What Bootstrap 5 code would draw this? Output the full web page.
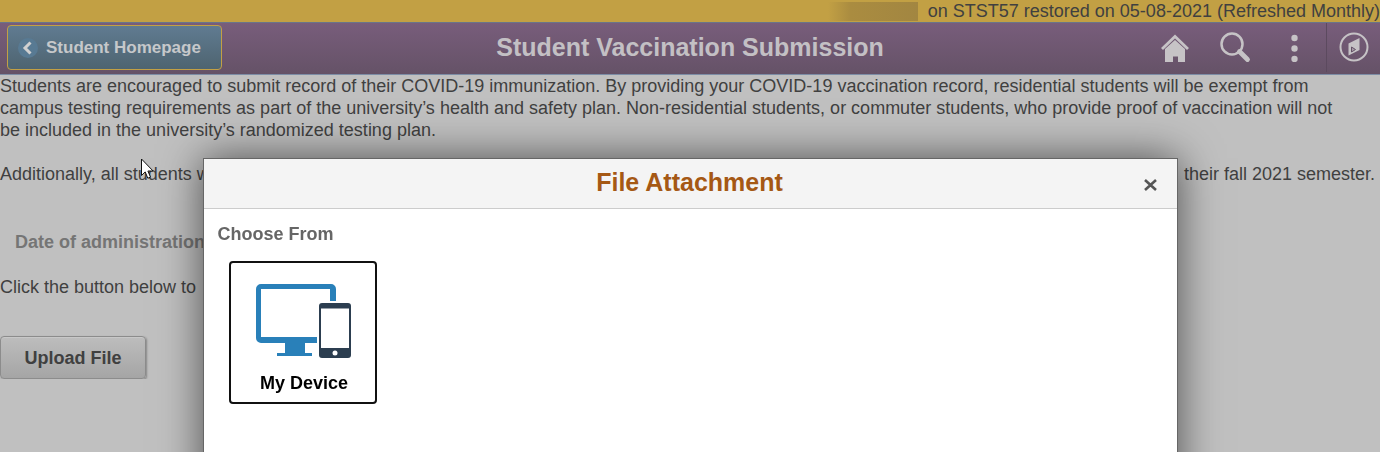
<!DOCTYPE html>
<html lang="en">
<head>
<meta charset="utf-8">
<meta name="viewport" content="width=device-width, initial-scale=1">
<title>Student Vaccination Submission</title>
<link href="https://cdn.jsdelivr.net/npm/bootstrap@5.3.0/dist/css/bootstrap.min.css" rel="stylesheet">
<style>
body{font-family:"Liberation Sans",Arial,sans-serif;font-size:18px;line-height:22px;color:#404040;background:#c0c0c0;overflow:hidden}
.env-bar{background:#c2a044;height:22px}
.env-db{width:90px;height:19px;margin-right:10px;background:linear-gradient(90deg,#c2a044,#aa8c40 25%,#a28641)}
.page-head{height:53px;padding-bottom:3px;background:linear-gradient(#785d7b,#655267);border-top:1px solid #6a7588;border-bottom:1px solid #7d8da6;color:#c3c0c4}
.head-side{flex:1 1 0}
.page-head h1{font-size:25px;line-height:30px}
.back-btn{height:45px;margin-left:7px;border:1px solid #c2a044;border-radius:4px;background:linear-gradient(#607b91,#4e6470);color:#c6c8ca;font-size:17px;line-height:22px;padding:2px 20px 0 10px;gap:8px}
.icon-btn{border:0;background:none;padding:0;color:#c6c3c6;width:60px;height:49px}
.nav-zone{border-left:1px solid #5c4a5f;width:54px}
.intro{margin-bottom:22px;padding-right:24px}
.semester{margin-bottom:46px;padding-right:5px}
.field-label{color:#757575;padding-left:15px;margin-bottom:23px}
.upload-btn{width:146px;height:43px;margin-top:38px;border:1px solid #8c8c8c;border-radius:4px;background:linear-gradient(#bdbdbd,#a5a5a5);color:#404040;font-size:18px;box-shadow:1px 1px 2px #888,inset 0 1px #c8c8c8}
.attach-modal{overflow:hidden}
.attach-modal .modal-dialog{max-width:975px;margin:158px auto 0}
.attach-modal .modal-content{min-height:calc(100vh - 100px);border:1px solid #666;border-radius:0;box-shadow:0 0 40px rgba(0,0,0,.6);color:#000}
.attach-modal .modal-header{height:50px;padding:0 20px 3px 32px;background:#f4f4f4;border-bottom:1px solid #ccc;border-radius:0}
.attach-modal h2{font-size:25px;line-height:30px;color:#a55814}
.close-x{border:0;background:none;padding:5px 0 0;line-height:0;color:#555}
.attach-modal .modal-body{padding:14px}
.attach-modal h3{font-size:18px;line-height:22px;color:#666}
.device-btn{width:148px;height:143px;border:2px solid #111;border-radius:4px;background:#fff;font-size:18px;margin:16px 0 0 11px;padding:3px 0 0 3px;gap:7px}
.pointer{position:absolute;left:141px;top:158px;z-index:1060}
</style>
</head>
<body>
<div class="env-bar d-flex justify-content-end align-items-center">
  <span class="env-db"></span><span class="text-nowrap">on STST57 restored on 05-08-2021 (Refreshed Monthly)</span>
</div>
<header class="page-head d-flex align-items-center">
  <div class="head-side d-flex">
    <button type="button" class="back-btn d-flex align-items-center fw-bold text-nowrap">
      <svg width="20" height="20" viewBox="0 0 20 20" aria-hidden="true"><circle cx="10" cy="10" r="10" fill="#587a93"/><path d="M12.500 4.500 7 10l5.500 5.500" fill="none" stroke="#d0d0d0" stroke-width="3"/></svg>
      Student Homepage
    </button>
  </div>
  <h1 class="m-0 fw-bold text-nowrap">Student Vaccination Submission</h1>
  <div class="head-side d-flex justify-content-end">
    <button type="button" class="icon-btn" aria-label="Home"><svg width="30" height="30" viewBox="0 0 30 30" fill="currentColor"><path d="M4 17 14 8l10 9v13.500h-7v-6h-5v6H4z"/><path d="M1 17 14 4.500 27 17" fill="none" stroke="currentColor" stroke-width="2.800"/></svg></button>
    <button type="button" class="icon-btn" aria-label="Search"><svg width="32" height="32" viewBox="0 0 32 32" fill="none" stroke="currentColor"><circle cx="12" cy="13" r="10.500" stroke-width="2.500"/><path d="M19.500 20.500 27.500 28.500" stroke-width="4.800" stroke-linecap="round"/></svg></button>
    <button type="button" class="icon-btn" aria-label="Actions"><svg width="10" height="30" viewBox="0 0 10 30" fill="currentColor"><circle cx="3.500" cy="6" r="3.200"/><circle cx="3.500" cy="16.500" r="3.200"/><circle cx="3.500" cy="27" r="3.200"/></svg></button>
    <button type="button" class="icon-btn nav-zone" aria-label="Navigator"><svg width="30" height="30" viewBox="0 0 30 30"><circle cx="15" cy="15" r="13.500" fill="none" stroke="currentColor" stroke-width="2"/><path d="M9.500 11.500 20.500 6v12L9.500 23.500z" fill="currentColor"/><path d="m12.500 15 4 2.500-4 2.500z" fill="#a59ba6" stroke="#655267"/></svg></button>
  </div>
</header>
<main>
  <p class="intro">Students are encouraged to submit record of their COVID-19 immunization. By providing your COVID-19 vaccination record, residential students will be exempt from campus testing requirements as part of the university’s health and safety plan. Non-residential students, or commuter students, who provide proof of vaccination will not be included in the university’s randomized testing plan.</p>
  <p class="semester d-flex justify-content-between"><span>Additionally, all students w</span><span>their fall 2021 semester.</span></p>
  <div class="field-label fw-bold">Date of administration</div>
  <p class="m-0">Click the button below to</p>
  <button type="button" class="upload-btn fw-bold">Upload File</button>
</main>

<div class="modal attach-modal d-block" tabindex="-1" role="dialog" aria-labelledby="attachTitle">
  <div class="modal-dialog">
    <div class="modal-content">
      <div class="modal-header">
        <h2 class="m-0 flex-fill text-center fw-bold" id="attachTitle">File Attachment</h2>
        <button type="button" class="close-x" aria-label="Close"><svg width="13" height="12" viewBox="0 0 13 12"><path d="m1 1 11 10M12 1 1 11" stroke="currentColor" stroke-width="2.600"/></svg></button>
      </div>
      <div class="modal-body">
        <h3 class="m-0 fw-bold">Choose From</h3>
        <button type="button" class="device-btn d-flex flex-column align-items-center justify-content-center fw-bold">
          <svg width="96" height="90" viewBox="0 0 96 90" aria-hidden="true">
            <path d="M5 9h70a5 5 0 0 1 5 5v12h-6V14H5v48h56v6H5a5 5 0 0 1-5-5V14a5 5 0 0 1 5-5zM29 67h20v11h7v3H21v-3h8z" fill="#2980b9"/>
            <rect x="63" y="28" width="32" height="55" rx="3" fill="#2c3e50"/><path d="M65 33.500h28V73H65z" fill="#fff"/><circle cx="79" cy="78" r="2.500" fill="#fff"/>
          </svg>
          <span>My Device</span>
        </button>
      </div>
    </div>
  </div>
</div>
<svg class="pointer" width="13" height="22" viewBox="0 0 13 22" aria-hidden="true"><path d="M.5 1v16.500l3.700-3.600 2.600 6.300 2.700-1.100-2.600-6.100h5.200z" fill="#fff" stroke="#111"/></svg>
<script src="https://cdn.jsdelivr.net/npm/bootstrap@5.3.0/dist/js/bootstrap.bundle.min.js"></script>
</body>
</html>
